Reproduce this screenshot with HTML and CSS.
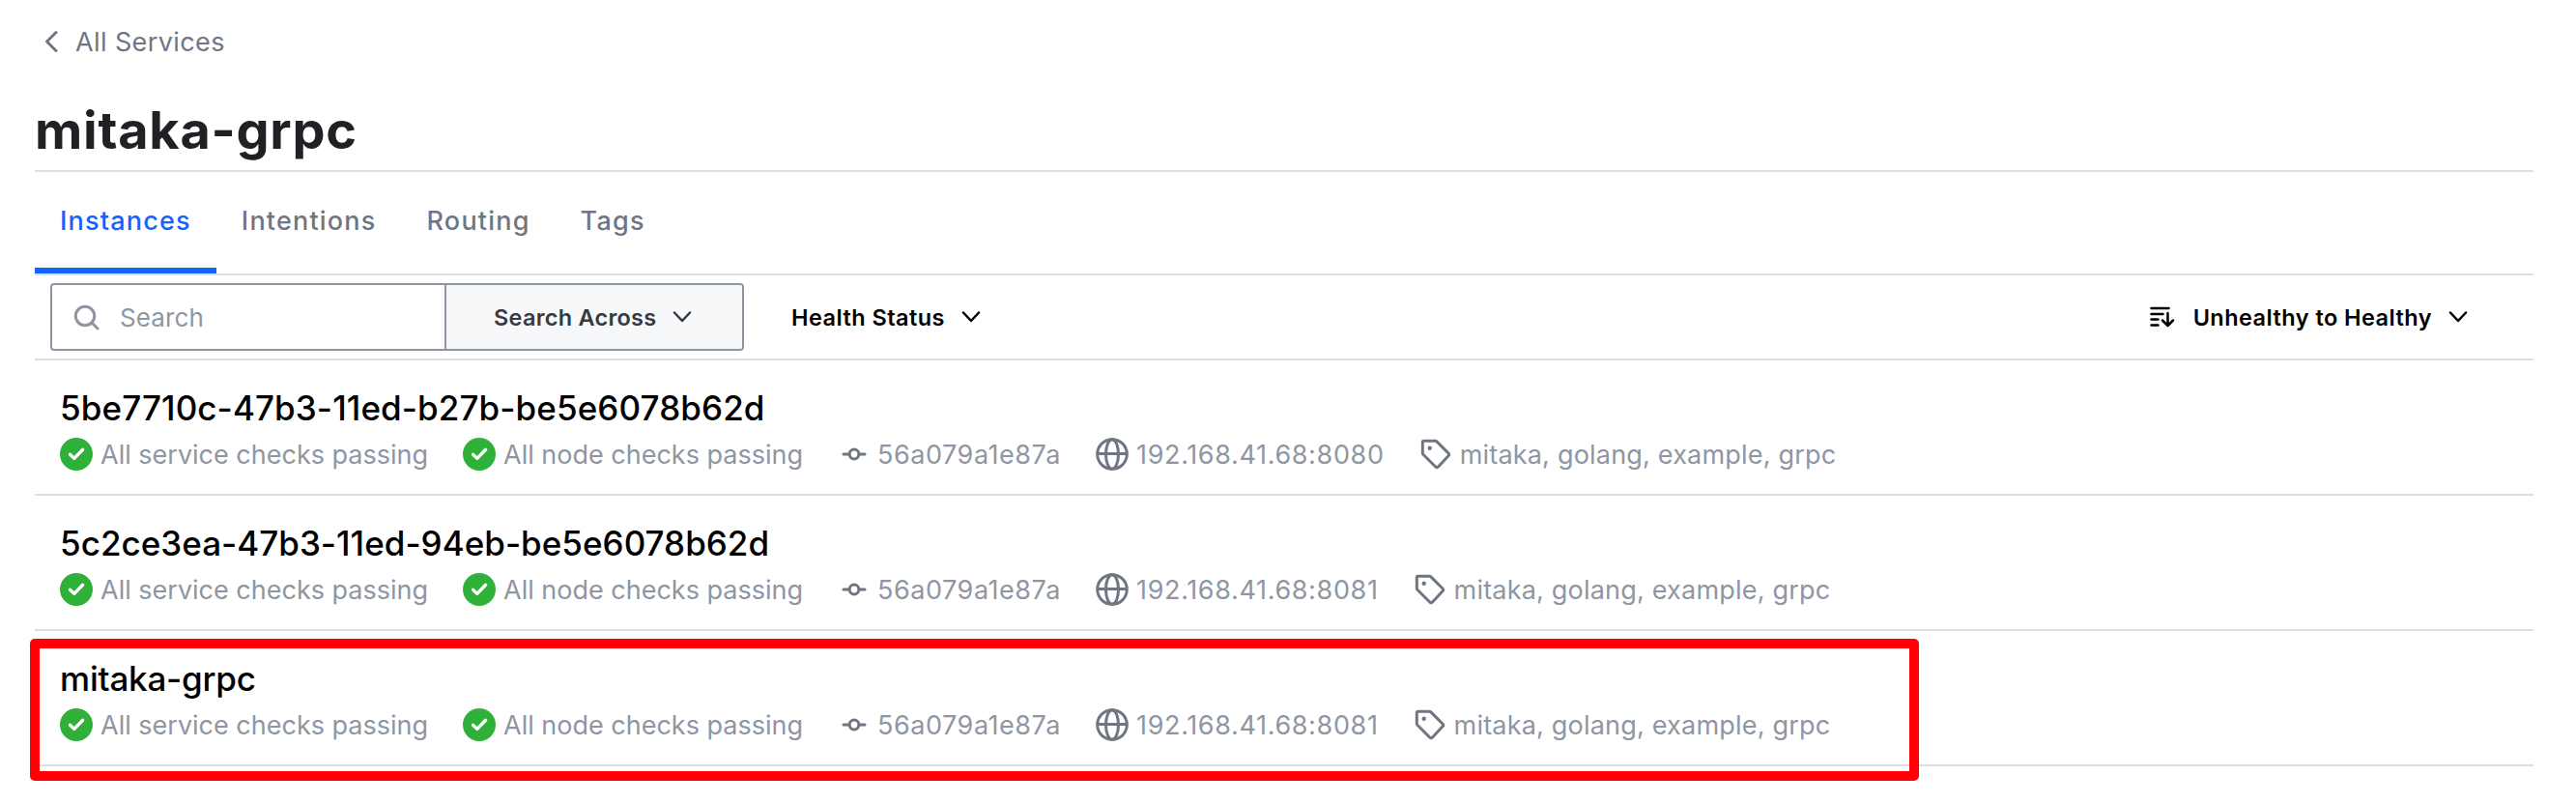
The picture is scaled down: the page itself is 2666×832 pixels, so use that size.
FILE: index.html
```html
<!DOCTYPE html>
<html lang="en">
<head>
<meta charset="utf-8">
<title>mitaka-grpc - Consul</title>
<link rel="stylesheet" href="styles.css">
</head>
<body>
<svg class="sprite" aria-hidden="true">
  <symbol id="check" viewBox="0 0 34 34"><circle cx="17" cy="17" r="17" fill="#2eb039"/><path d="M10.500 17.200l4.300 4.200L23.600 12.300" fill="none" stroke="#fff" stroke-width="3.400" stroke-linecap="round" stroke-linejoin="round"/></symbol>
  <symbol id="node" viewBox="0 0 28 28"><path d="M3 14h5.500M19.500 14H25" fill="none" stroke="currentColor" stroke-width="3" stroke-linecap="round"/><circle cx="14" cy="14" r="4.900" fill="none" stroke="currentColor" stroke-width="3"/></symbol>
  <symbol id="globe" viewBox="0 0 34 34"><g fill="none" stroke="currentColor" stroke-width="3"><circle cx="17" cy="17" r="15.300"/><ellipse cx="17" cy="17" rx="6.500" ry="15.300"/><path d="M1.500 16.500h31"/></g></symbol>
  <symbol id="tag" viewBox="0 0 34 34"><path d="M4.500 3.300h12a2 2 0 0 1 1.400.6L30 16a2 2 0 0 1 0 2.800L19.500 30a2 2 0 0 1-2.800 0L3.900 17.300a2 2 0 0 1-.6-1.400V4.500a1.200 1.200 0 0 1 1.200-1.200z" fill="none" stroke="currentColor" stroke-width="3" stroke-linejoin="round"/><circle cx="10.700" cy="10.700" r="2.200" fill="currentColor"/></symbol>
  <symbol id="down" viewBox="0 0 20 12"><path d="M2 1.500L10 10l8-8.500" fill="none" stroke="currentColor" stroke-width="2.500" stroke-linecap="round" stroke-linejoin="round"/></symbol>
</svg>
<main class="page">
  <nav class="crumbs"><svg class="back" viewBox="0 0 14 24"><path d="M12 2.500L2.500 12l9.500 9.500" fill="none" stroke="currentColor" stroke-width="3" stroke-linecap="round" stroke-linejoin="round"/></svg><a>All Services</a></nav>
  <h1 class="title"><span>mitaka-grpc</span></h1>
  <ul class="tabs">
    <li class="tab tab-active">Instances</li><li class="tab">Intentions</li><li class="tab">Routing</li><li class="tab">Tags</li>
  </ul>
  <div class="toolbar">
    <div class="search">
      <div class="search-field"><svg class="lens" viewBox="0 -1 28 28"><circle cx="12" cy="12" r="9.700" fill="none" stroke="currentColor" stroke-width="3"/><path d="M19 19l6 6" stroke="currentColor" stroke-width="3" stroke-linecap="round"/></svg><span>Search</span></div>
      <div class="search-across"><span>Search Across</span><svg class="chevron"><use href="#down"/></svg></div>
    </div>
    <div class="menu"><span>Health Status</span><svg class="chevron"><use href="#down"/></svg></div>
    <div class="menu sort"><svg class="sort-icon" viewBox="0 0 26 22"><path d="M1.500 2h18M1.500 8h12M1.500 13.500h7M1.500 19.500h7M18.500 7v12.500M13 14.500l5.500 5.500 5.500-5.500" fill="none" stroke="currentColor" stroke-width="2.500" stroke-linecap="round" stroke-linejoin="round"/></svg><span>Unhealthy to Healthy</span><svg class="chevron"><use href="#down"/></svg></div>
  </div>
  <ul class="instances">
    <li class="instance">
      <h2 class="name">5be7710c-47b3-11ed-b27b-be5e6078b62d</h2>
      <div class="facts">
        <div class="fact"><svg class="icon"><use href="#check"/></svg><span>All service checks passing</span></div>
        <div class="fact"><svg class="icon"><use href="#check"/></svg><span>All node checks passing</span></div>
        <div class="fact host"><svg class="icon-node"><use href="#node"/></svg><span>56a079a1e87a</span></div>
        <div class="fact address"><svg class="icon"><use href="#globe"/></svg><span>192.168.41.68:8080</span></div>
        <div class="fact tags"><svg class="icon"><use href="#tag"/></svg><span>mitaka, golang, example, grpc</span></div>
      </div>
    </li>
    <li class="instance">
      <h2 class="name name-snug">5c2ce3ea-47b3-11ed-94eb-be5e6078b62d</h2>
      <div class="facts">
        <div class="fact"><svg class="icon"><use href="#check"/></svg><span>All service checks passing</span></div>
        <div class="fact"><svg class="icon"><use href="#check"/></svg><span>All node checks passing</span></div>
        <div class="fact host"><svg class="icon-node"><use href="#node"/></svg><span>56a079a1e87a</span></div>
        <div class="fact address"><svg class="icon"><use href="#globe"/></svg><span>192.168.41.68:8081</span></div>
        <div class="fact tags"><svg class="icon"><use href="#tag"/></svg><span>mitaka, golang, example, grpc</span></div>
      </div>
    </li>
    <li class="instance">
      <h2 class="name name-tight">mitaka-grpc</h2>
      <div class="facts">
        <div class="fact"><svg class="icon"><use href="#check"/></svg><span>All service checks passing</span></div>
        <div class="fact"><svg class="icon"><use href="#check"/></svg><span>All node checks passing</span></div>
        <div class="fact host"><svg class="icon-node"><use href="#node"/></svg><span>56a079a1e87a</span></div>
        <div class="fact address"><svg class="icon"><use href="#globe"/></svg><span>192.168.41.68:8081</span></div>
        <div class="fact tags"><svg class="icon"><use href="#tag"/></svg><span>mitaka, golang, example, grpc</span></div>
      </div>
      <div class="highlight"></div>
    </li>
  </ul>
</main>
</body>
</html>
```
FILE: styles.css
```css
* { box-sizing: border-box; }
body { margin: 0; background: #fff; font-family: Inter, "Liberation Sans", sans-serif; height: 832px; overflow: hidden; }
ul { list-style: none; margin: 0; padding: 0; }
svg { display: block; flex: none; }
span, a { white-space: nowrap; }
.sprite { position: absolute; width: 0; height: 0; }
.page { width: 2586px; margin-left: 36px; }

.crumbs { display: flex; align-items: center; height: 86px; padding-left: 10px; gap: 18px; font-size: 27px; line-height: 34px; letter-spacing: 0.4px; color: #6f7682; }
.crumbs a { padding-top: 1px; }
.back { width: 14px; height: 24px; }
.title { display: flex; align-items: center; height: 92px; margin: 0; padding-top: 8px; border-bottom: 2px solid #dce0e6; font-size: 54px; line-height: 70px; font-weight: 700; letter-spacing: 0.75px; color: #1f2124; }

.tabs { display: flex; height: 107px; border-bottom: 2px solid #dce0e6; font-size: 27px; font-weight: 500; letter-spacing: 1.2px; color: #6f7682; }
.tab { display: flex; align-items: center; padding: 1px 26px 0; height: 105px; border-bottom: 6px solid transparent; }
.tab-active { color: #1563ff; border-color: #1563ff; }

.toolbar { display: flex; align-items: center; height: 88px; padding: 0 68px 0 16px; border-bottom: 2px solid #dce0e6; font-size: 23.5px; font-weight: 600; letter-spacing: 0.45px; }
.search { display: flex; width: 718px; height: 70px; border: 2px solid #8e96a3; border-radius: 4px; overflow: hidden; }
.search-field { display: flex; align-items: center; width: 406px; padding-left: 22px; gap: 20px; font-size: 26px; font-weight: 400; letter-spacing: 0.1px; color: #8e96a3; }
.lens { width: 28px; height: 28px; }
.search-across { display: flex; align-items: center; flex: 1; padding-left: 49px; gap: 17px; border-left: 2px solid #8e96a3; background: #f7f8fa; color: #373a42; letter-spacing: 0.25px; }
.chevron { width: 20px; height: 12px; }
.menu { display: flex; align-items: center; gap: 17px; margin-left: 49px; color: #000; }
.sort { margin-left: auto; }
.sort-icon { width: 26px; height: 22px; margin-right: 2px; }

.instance { position: relative; height: 140px; padding: 27px 0 0 26px; border-bottom: 2px solid #dce0e6; }
.name { margin: 0; font-size: 35px; line-height: 44px; font-weight: 500; letter-spacing: 0.1px; color: #000; white-space: nowrap; }
.name-snug { letter-spacing: 0.02px; }
.name-tight { letter-spacing: -0.2px; }
.facts { display: grid; grid-template-columns: 417px 391px 264px auto auto; justify-content: start; align-items: center; height: 34px; margin-top: 9px; font-size: 27px; color: #8e96a3; }
.fact { display: flex; align-items: center; gap: 8px; }
.host { gap: 10px; letter-spacing: 0.55px; }
.address { margin-right: 36px; letter-spacing: 0.65px; }
.tags { letter-spacing: 0.2px; }
.icon { width: 34px; height: 34px; color: #6f7682; }
.icon-node { width: 28px; height: 28px; color: #6f7682; }
.highlight { position: absolute; left: -5px; top: 8px; width: 1955px; height: 147px; border: 10px solid #ff0006; border-radius: 5px; }
```
